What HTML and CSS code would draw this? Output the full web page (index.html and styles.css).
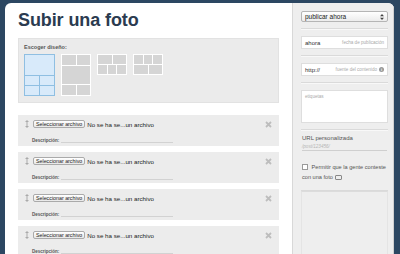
FILE: index.html
```html
<!DOCTYPE html>
<html lang="es">
<head>
  <meta charset="UTF-8">
  <meta name="viewport" content="width=device-width, initial-scale=1.0">
  <title>Subir una foto</title>
  <link rel="stylesheet" href="styles.css">
</head>
<body>
<div class="page">
  <div class="main">
    <h1>Subir una foto</h1>

    <div class="layouts">
      <div class="layouts-label">Escoger diseño:</div>
      <div class="layout-list">
        <div class="thumb thumb-tall selected">
          <span class="cell span2"></span>
          <span class="cell"></span><span class="cell"></span>
          <span class="cell"></span><span class="cell"></span>
        </div>
        <div class="thumb thumb-tall">
          <span class="cell"></span><span class="cell"></span>
          <span class="cell span2 big"></span>
          <span class="cell"></span><span class="cell"></span>
        </div>
        <div class="thumb thumb-short">
          <div class="thumb-row"><span class="cell"></span><span class="cell"></span></div>
          <div class="thumb-row"><span class="cell"></span><span class="cell"></span><span class="cell"></span></div>
        </div>
        <div class="thumb thumb-short">
          <div class="thumb-row"><span class="cell"></span><span class="cell"></span><span class="cell"></span></div>
          <div class="thumb-row"><span class="cell"></span><span class="cell"></span></div>
        </div>
      </div>
    </div>

    <div class="photo-row">
      <div class="photo-top">
        <svg class="handle" width="4" height="8" viewBox="0 0 4 8"><path d="M2 0 L4 2 H0 Z M2 8 L4 6 H0 Z M1.5 2 H2.5 V6 H1.5 Z" fill="#aaa"/></svg>
        <button type="button" class="file-btn">Seleccionar archivo</button>
        <span class="file-name">No se ha se...un archivo</span>
        <svg class="remove" width="7" height="7" viewBox="0 0 7 7"><path d="M1 1 L6 6 M6 1 L1 6" stroke="#bdbdbd" stroke-width="1.8"/></svg>
      </div>
      <div class="photo-desc"><span>Descripción:</span><span class="desc-line"></span></div>
    </div>

    <div class="photo-row">
      <div class="photo-top">
        <svg class="handle" width="4" height="8" viewBox="0 0 4 8"><path d="M2 0 L4 2 H0 Z M2 8 L4 6 H0 Z M1.5 2 H2.5 V6 H1.5 Z" fill="#aaa"/></svg>
        <button type="button" class="file-btn">Seleccionar archivo</button>
        <span class="file-name">No se ha se...un archivo</span>
        <svg class="remove" width="7" height="7" viewBox="0 0 7 7"><path d="M1 1 L6 6 M6 1 L1 6" stroke="#bdbdbd" stroke-width="1.8"/></svg>
      </div>
      <div class="photo-desc"><span>Descripción:</span><span class="desc-line"></span></div>
    </div>

    <div class="photo-row">
      <div class="photo-top">
        <svg class="handle" width="4" height="8" viewBox="0 0 4 8"><path d="M2 0 L4 2 H0 Z M2 8 L4 6 H0 Z M1.5 2 H2.5 V6 H1.5 Z" fill="#aaa"/></svg>
        <button type="button" class="file-btn">Seleccionar archivo</button>
        <span class="file-name">No se ha se...un archivo</span>
        <svg class="remove" width="7" height="7" viewBox="0 0 7 7"><path d="M1 1 L6 6 M6 1 L1 6" stroke="#bdbdbd" stroke-width="1.8"/></svg>
      </div>
      <div class="photo-desc"><span>Descripción:</span><span class="desc-line"></span></div>
    </div>

    <div class="photo-row">
      <div class="photo-top">
        <svg class="handle" width="4" height="8" viewBox="0 0 4 8"><path d="M2 0 L4 2 H0 Z M2 8 L4 6 H0 Z M1.5 2 H2.5 V6 H1.5 Z" fill="#aaa"/></svg>
        <button type="button" class="file-btn">Seleccionar archivo</button>
        <span class="file-name">No se ha se...un archivo</span>
        <svg class="remove" width="7" height="7" viewBox="0 0 7 7"><path d="M1 1 L6 6 M6 1 L1 6" stroke="#bdbdbd" stroke-width="1.8"/></svg>
      </div>
      <div class="photo-desc"><span>Descripción:</span><span class="desc-line"></span></div>
    </div>
  </div>

  <div class="sidebar">
    <div class="side-section">
      <div class="select-box">
        <span>publicar ahora</span>
        <svg width="4" height="6" viewBox="0 0 4 6"><path d="M2 0 L4 2.3 H0 Z M2 6 L4 3.7 H0 Z" fill="#444"/></svg>
      </div>
    </div>
    <div class="side-section">
      <div class="text-box">
        <span class="value">ahora</span>
        <span class="hint">fecha de publicación</span>
      </div>
    </div>
    <div class="side-section">
      <div class="text-box">
        <span class="value">http://</span>
        <span class="hint">fuente del contenido <span class="info">i</span></span>
      </div>
    </div>
    <div class="side-section">
      <div class="tags-box">etiquetas</div>
    </div>
    <div class="side-section plain">
      <div class="side-label">URL personalizada</div>
      <div class="url-field">/post/123456/</div>
      <div class="check-line">
        <span class="checkbox"></span> Permitir que la gente conteste con una foto <span class="camera"></span>
      </div>
    </div>
    <div class="side-section last">
      <div class="extra-box"></div>
    </div>
  </div>
</div>
</body>
</html>
```

FILE: styles.css
```css
body {
  margin: 0;
  background-color: #2c4762;
  font-family: "Liberation Sans", Arial, Helvetica, sans-serif;
  overflow: hidden;
}

.page {
  display: flex;
  margin: 3px 6px 0 5px;
  height: 251px;
  background: white;
  border-radius: 6px 6px 0 0;
  overflow: hidden;
}

.main {
  width: 287px;
  padding: 7px 13px 0 13px;
  box-sizing: border-box;
}

h1 {
  margin: 0;
  font-size: 18px;
  line-height: 20px;
  color: #2b3b50;
  letter-spacing: -0.1px;
}

.layouts {
  margin-top: 8px;
  height: 65px;
  box-sizing: border-box;
  padding: 4px 5px 0 5px;
  background: #ebebeb;
  border: 1px solid #e2e2e2;
}

.layouts-label {
  font-size: 5.5px;
  line-height: 8px;
  font-weight: bold;
  color: #555;
}

.layout-list {
  display: flex;
  gap: 6px;
  margin-top: 3px;
  align-items: flex-start;
}

.thumb {
  width: 30px;
  box-sizing: border-box;
  background: white;
  padding: 1px;
}

.thumb-tall {
  height: 42px;
  display: grid;
  grid-template-columns: 1fr 1fr;
  grid-template-rows: 10px 1fr 10px;
  gap: 1px;
}

.thumb-tall.selected {
  width: 31px;
  background: #8fbfe2;
  grid-template-rows: 1fr 9px 9px;
}

.thumb-tall.selected .cell {
  background: #d8eafa;
}

.thumb-short {
  height: 21px;
  display: flex;
  flex-direction: column;
  gap: 1px;
}

.thumb-row {
  flex: 1;
  display: flex;
  gap: 1px;
}

.thumb-row .cell {
  flex: 1;
}

.cell {
  display: block;
  background: #d5d5d5;
}

.cell.span2 {
  grid-column: span 2;
}

.photo-row {
  margin-top: 12px;
  height: 31px;
  box-sizing: border-box;
  padding: 5px 7px 0 7px;
  background: #ececec;
}

.photo-row + .photo-row {
  margin-top: 6px;
}

.photo-top {
  display: flex;
  align-items: center;
  height: 8px;
}

.handle {
  margin-right: 4px;
}

.file-btn {
  font-family: "Liberation Sans", Arial, sans-serif;
  font-size: 5.3px;
  line-height: 6px;
  height: 8px;
  padding: 0 2px;
  margin: 0;
  color: #222;
  background: linear-gradient(#ffffff, #e8e8e8);
  border: 1px solid #aaa;
  border-radius: 2px;
}

.file-name {
  margin-left: 2px;
  font-size: 6.2px;
  color: #222;
}

.remove {
  margin-left: auto;
}

.photo-desc {
  display: flex;
  align-items: flex-end;
  margin-top: 10px;
  padding-left: 7px;
  font-size: 4.5px;
  font-weight: bold;
  color: #555;
}

.desc-line {
  width: 112px;
  margin-left: 2px;
  border-bottom: 1px solid #d2d2d2;
}

.sidebar {
  flex: 1;
  background: #eeeeee;
  border-left: 1px solid #d8d8d8;
  border-right: 1px solid #d0d0d0;
  padding: 0 5px 0 8px;
}

.side-section {
  border-bottom: 1px solid #dadada;
  box-shadow: 0 1px 0 #f8f8f8;
  padding: 7px 0 6px 0;
}

.side-section:first-child {
  padding-top: 8px;
}

.side-section.plain {
  padding: 4px 0 8px 1px;
}

.side-section.last {
  border-bottom: none;
  box-shadow: none;
  padding-top: 0;
}

.select-box {
  display: flex;
  align-items: center;
  justify-content: space-between;
  height: 9px;
  padding: 0 3px;
  font-size: 6.5px;
  color: #222;
  background: linear-gradient(#ffffff, #ececec);
  border: 1px solid #b5b5b5;
  border-radius: 2px;
}

.text-box {
  display: flex;
  align-items: center;
  justify-content: space-between;
  height: 11px;
  padding: 0 3px;
  background: white;
  border: 1px solid #dedede;
}

.value {
  font-size: 6px;
  color: #333;
}

.hint {
  display: flex;
  align-items: center;
  font-size: 4.6px;
  color: #aaa;
}

.info {
  display: inline-flex;
  align-items: center;
  justify-content: center;
  width: 5px;
  height: 5px;
  margin-left: 2px;
  border-radius: 50%;
  background: #999;
  color: white;
  font-size: 4px;
  font-weight: bold;
}

.tags-box {
  height: 33px;
  padding: 3px 3px;
  box-sizing: border-box;
  background: white;
  border: 1px solid #dedede;
  font-size: 4.6px;
  color: #aaa;
}

.side-label {
  font-size: 6px;
  line-height: 8px;
  color: #555;
}

.url-field {
  margin-top: 2px;
  width: 85px;
  padding-bottom: 1px;
  border-bottom: 1px solid #cfcfcf;
  font-size: 4.6px;
  font-style: italic;
  color: #b5b5b5;
}

.check-line {
  margin-top: 11px;
  padding-right: 2px;
  font-size: 5.6px;
  line-height: 10px;
  color: #555;
}

.checkbox {
  display: inline-block;
  width: 4px;
  height: 4px;
  margin-right: 2px;
  vertical-align: -0.5px;
  background: white;
  border: 1px solid #999;
}

.camera {
  display: inline-block;
  width: 5px;
  height: 3px;
  margin-left: 1px;
  border: 1px solid #888;
  border-radius: 1px;
  vertical-align: middle;
}

.extra-box {
  height: 70px;
  border: 1px solid #e4e4e4;
  border-top-color: #dcdcdc;
}
```
